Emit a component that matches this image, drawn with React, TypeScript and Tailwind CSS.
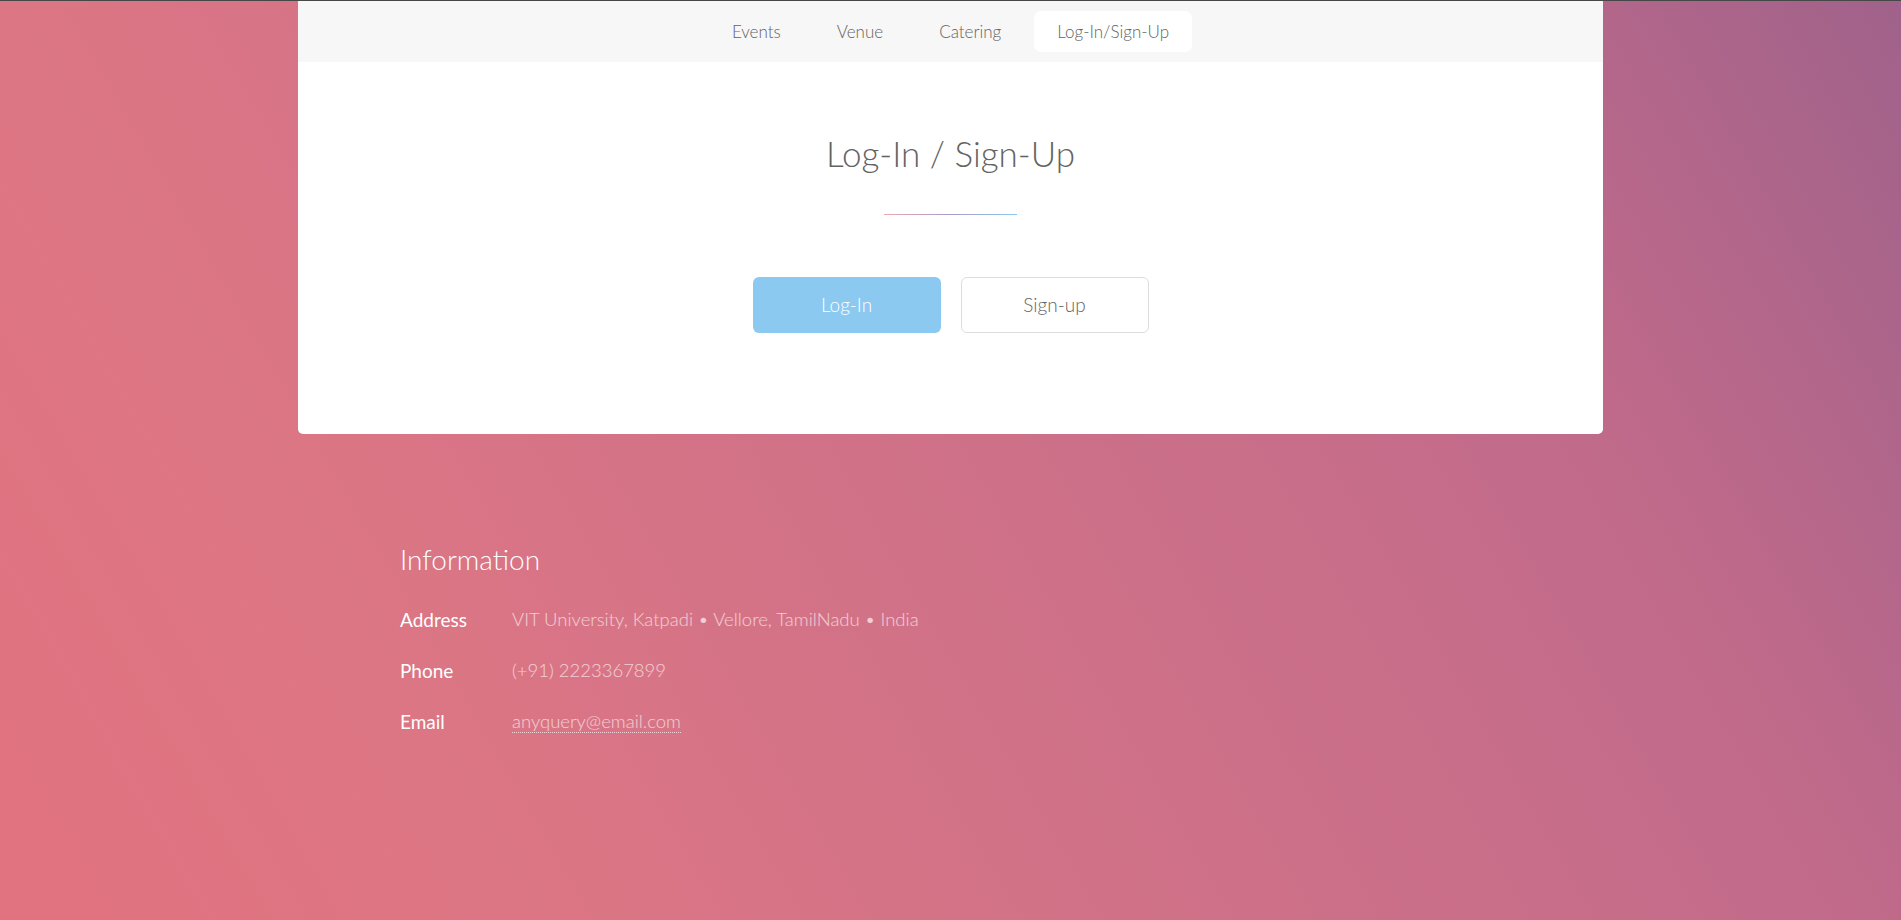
import React from 'react';

const navItems = ['Events', 'Venue', 'Catering', 'Log-In/Sign-Up'];

const info = [
  { label: 'Address', value: 'VIT University, Katpadi • Vellore, TamilNadu • India' },
  { label: 'Phone', value: '(+91) 2223367899' },
  { label: 'Email', value: 'anyquery@email.com', link: true },
];

export default function App() {
  return (
    <div className="min-h-screen bg-[linear-gradient(60deg,#e2727f_0%,#dc7684_22%,#c86e8a_64%,#c06a8a_78%,#a0628a_100%)] font-['Lato','Open_Sans',sans-serif] text-[#636363]">
      <div className="h-px bg-[#474747]" />

      {/* Main card */}
      <div className="mx-auto w-[1305px] rounded-b-[5px] bg-white">
        <nav className="flex h-[61px] items-center justify-center gap-[10px] bg-[#f7f7f7]">
          {navItems.map((item, i) => (
            <a
              key={item}
              href="#"
              className={`h-[41px] rounded-[7px] px-[23px] text-[17px] font-light leading-[41px] ${
                i === navItems.length - 1 ? 'bg-white' : ''
              }`}
            >
              {item}
            </a>
          ))}
        </nav>

        <div className="flex flex-col items-center pt-[74px] pb-[101px]">
          <h2 className="text-[35px] font-light leading-none">Log-In / Sign-Up</h2>
          <div className="mt-[43px] h-px w-[133px] bg-[linear-gradient(90deg,#efa8b0,#a89cc8,#8cc9f0)]" />

          <div className="mt-[62px] flex gap-[20px]">
            <button className="h-[56px] w-[188px] rounded-[6px] bg-[#8cc9f0] text-[19px] font-light text-white">
              Log-In
            </button>
            <button className="h-[56px] w-[188px] rounded-[6px] border border-[#dddddd] bg-white text-[19px] font-light text-[#636363]">
              Sign-up
            </button>
          </div>
        </div>
      </div>

      {/* Footer */}
      <footer className="mx-auto w-[1305px] px-[102px] pt-[111px] pb-[120px] text-white">
        <h2 className="text-[28px] font-light leading-none">Information</h2>
        <dl className="mt-[34px] flex flex-col gap-[26px] text-[18.5px] leading-[25px]">
          {info.map((row) => (
            <div key={row.label} className="flex">
              <dt className="w-[112px] text-[19px] font-normal">{row.label}</dt>
              <dd className="font-light text-white/65">
                {row.link ? (
                  <a href="#" className="border-b border-dotted border-white/70">
                    {row.value}
                  </a>
                ) : (
                  row.value
                )}
              </dd>
            </div>
          ))}
        </dl>
      </footer>
    </div>
  );
}
